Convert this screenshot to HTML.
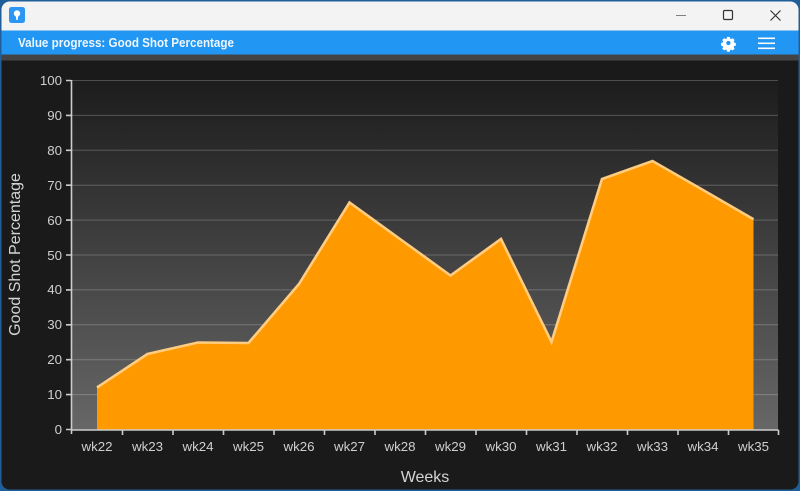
<!DOCTYPE html>
<html><head><meta charset="utf-8"><style>
html,body{margin:0;padding:0;width:800px;height:491px;overflow:hidden;background:#1f5f99}
svg{display:block}
text{font-family:"Liberation Sans",sans-serif}
</style></head><body>
<svg width="800" height="491" viewBox="0 0 800 491" xmlns="http://www.w3.org/2000/svg">
<defs><linearGradient id="g" x1="0" y1="0" x2="0" y2="1"><stop offset="0" stop-color="#1c1c1c"/><stop offset="1" stop-color="#676767"/></linearGradient></defs>
<rect width="800" height="491" fill="#1f5f99"/>
<rect x="1.5" y="1.5" width="797" height="488" rx="8" fill="#1a1a1a"/>
<path d="M1.5 30.5V9.5a8 8 0 0 1 8-8h781a8 8 0 0 1 8 8v21z" fill="#f3f3f3"/>
<rect x="1.5" y="30.5" width="797" height="24" fill="#2196f3"/>
<rect x="1.5" y="54.5" width="797" height="6" fill="#444"/>
<rect x="9" y="7" width="16" height="16" rx="2.5" fill="#2b96f3"/>
<circle cx="17" cy="13.5" r="3.2" fill="#fff"/><path d="M15.8 16h2.4l-.5 4h-1.4z" fill="#fff"/>
<rect x="676" y="15" width="10" height="1" fill="#808080"/>
<rect x="723.5" y="10.5" width="9" height="9" rx="1.2" fill="none" stroke="#333" stroke-width="1.2"/>
<path d="M770.5 10.5l10 10M780.5 10.5l-10 10" stroke="#333" stroke-width="1.2" fill="none"/>
<text x="18" y="47" font-size="12.5" font-weight="700" fill="#eef6fe" textLength="216" lengthAdjust="spacingAndGlyphs">Value progress: Good Shot Percentage</text>
<g fill="#fff"><path fill-rule="evenodd" transform="translate(728.4 43) scale(.87) translate(-728.2 -43)" d="M726.6 36h3.2l.4 1.9 1.2.5 1.7-1 2.2 2.2-1 1.7.5 1.2 1.9.4v3.2l-1.9.4-.5 1.2 1 1.7-2.2 2.2-1.7-1-1.2.5-.4 1.9h-3.2l-.4-1.9-1.2-.5-1.7 1-2.2-2.2 1-1.7-.5-1.2-1.9-.4v-3.2l1.9-.4.5-1.2-1-1.7 2.2-2.2 1.7 1 1.2-.5z M728.2 40.5a2.5 2.5 0 1 0 0 5 2.5 2.5 0 0 0 0-5z"/>
<rect x="758" y="37.5" width="17" height="1.6"/><rect x="758" y="42.5" width="17" height="1.6"/><rect x="758" y="47.5" width="17" height="1.6"/></g>
<rect x="72" y="80" width="706" height="350" fill="url(#g)"/>
<g stroke="#fff" stroke-opacity=".22" stroke-width="1"><path d="M66 80.5H778M66 115.4H778M66 150.3H778M66 185.2H778M66 220.1H778M66 255H778M66 289.9H778M66 324.8H778M66 359.7H778M66 394.6H778"/></g>
<path d="M97 387.5L147.5 354L198 342.5L248.5 343L299 284L349.5 202.5L400 239L450.5 275.5L501 239L551.5 342L602 179L652.5 161L703 190L753.5 219.3V429.5H97Z" fill="#ff9900"/>
<path d="M97 387.5L147.5 354L198 342.5L248.5 343L299 284L349.5 202.5L400 239L450.5 275.5L501 239L551.5 342L602 179L652.5 161L703 190L753.5 219.3" fill="none" stroke="#ffcc80" stroke-width="2.6"/>
<g stroke="#cccccc" stroke-width="1.6" fill="none">
<path d="M71.5 80V434M71 430H778.5"/>
<path d="M66 80.5H71M66 115.4H71M66 150.3H71M66 185.2H71M66 220.1H71M66 255H71M66 289.9H71M66 324.8H71M66 359.7H71M66 394.6H71M66 429.5H71"/>
<path d="M122.5 430v5M173 430v5M223.5 430v5M274 430v5M324.5 430v5M375 430v5M425.5 430v5M476 430v5M526.5 430v5M577 430v5M627.5 430v5M678 430v5M728.5 430v5M778.5 430v5"/>
</g>
<g font-size="13.3" fill="#cfcfcf" text-anchor="end">
<text x="62" y="85">100</text><text x="62" y="120">90</text><text x="62" y="155">80</text><text x="62" y="190">70</text><text x="62" y="225">60</text><text x="62" y="260">50</text><text x="62" y="294">40</text><text x="62" y="329">30</text><text x="62" y="364">20</text><text x="62" y="399">10</text><text x="62" y="434">0</text>
</g>
<g font-size="13.3" fill="#cfcfcf" text-anchor="middle">
<text x="97" y="451">wk22</text><text x="147.5" y="451">wk23</text><text x="198" y="451">wk24</text><text x="248.5" y="451">wk25</text><text x="299" y="451">wk26</text><text x="349.5" y="451">wk27</text><text x="400" y="451">wk28</text><text x="450.5" y="451">wk29</text><text x="501" y="451">wk30</text><text x="551.5" y="451">wk31</text><text x="602" y="451">wk32</text><text x="652.5" y="451">wk33</text><text x="703" y="451">wk34</text><text x="753.5" y="451">wk35</text>
</g>
<text x="425" y="482" font-size="16" fill="#d4d4d4" text-anchor="middle">Weeks</text>
<text transform="translate(20 254.5) rotate(-90)" font-size="16" fill="#d4d4d4" text-anchor="middle">Good Shot Percentage</text>
</svg>
</body></html>
